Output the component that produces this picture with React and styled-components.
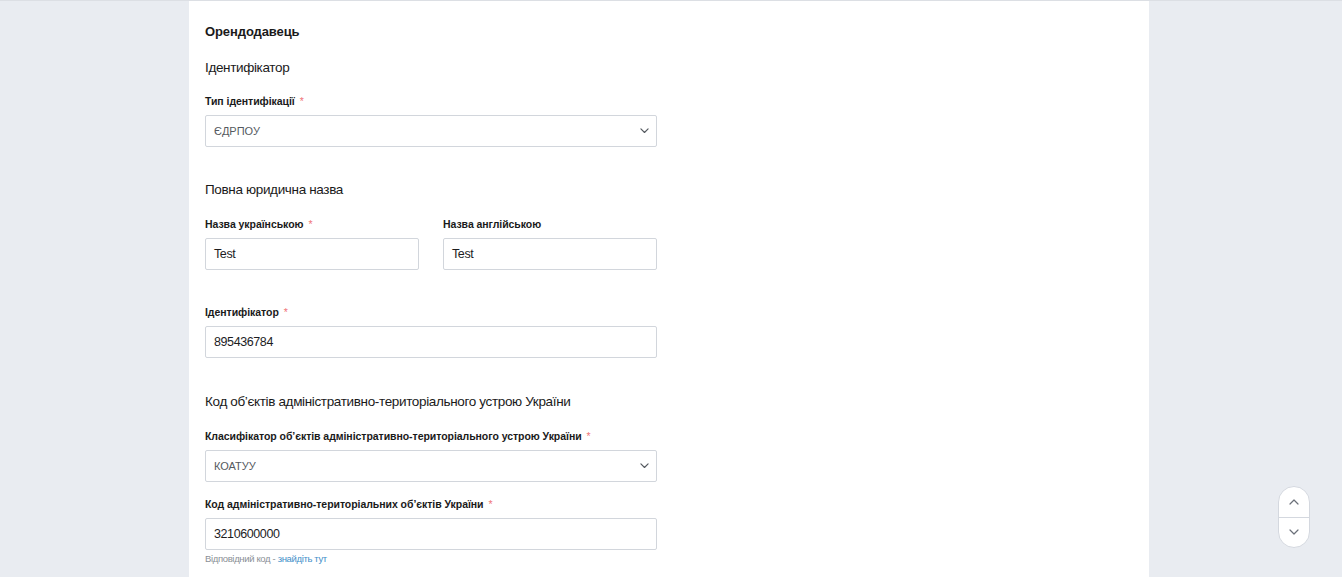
import React from "react";
import styled, { createGlobalStyle } from "styled-components";

const GlobalStyle = createGlobalStyle`
  html, body {
    margin: 0;
    padding: 0;
    background: #e9ecf1;
    font-family: "Liberation Sans", Arial, sans-serif;
    color: #1d1d1f;
  }
  body {
    border-top: 1px solid #dcdfe4;
    min-height: 576px;
  }
`;

const Panel = styled.div`
  margin-left: 189px;
  width: 960px;
  min-height: 576px;
  background: #fff;
  box-sizing: border-box;
  padding: 21px 16px 0 16px;
`;

const Title = styled.h2`
  margin: 0;
  font-size: 13px;
  line-height: 20px;
  font-weight: 700;
  letter-spacing: -0.1px;
  color: #1a1a1a;
`;

const Subtitle = styled.h3`
  margin: ${(p) => p.mt}px 0 0;
  font-size: 13.5px;
  line-height: 20px;
  font-weight: 400;
  letter-spacing: -0.35px;
  color: #1a1a1a;
`;

const Field = styled.div`
  margin-top: ${(p) => p.mt}px;
  width: ${(p) => p.width || "452px"};
  display: flex;
  flex-direction: column;
  gap: 6px;
`;

const Row = styled.div`
  margin-top: ${(p) => p.mt}px;
  display: flex;
  gap: 24px;
`;

const Label = styled.label`
  font-size: 10.5px;
  line-height: 16px;
  font-weight: 700;
  letter-spacing: -0.05px;
  color: #1a1a1a;
`;

const Star = styled.span`
  color: #f0767a;
  margin-left: 5px;
  font-weight: 400;
`;

const Input = styled.div`
  height: 32px;
  box-sizing: border-box;
  border: 1px solid #d2d6dc;
  border-radius: 2px;
  padding: 0 8px;
  display: flex;
  align-items: center;
  font-size: 12.5px;
  letter-spacing: -0.4px;
  color: #1d1d1f;
`;

const Select = styled(Input)`
  justify-content: space-between;
  font-size: 11px;
  letter-spacing: 0;
  color: #555a60;
  padding: 0 7px 0 8px;
`;

const Hint = styled.div`
  margin-top: 2px;
  font-size: 9.5px;
  line-height: 14px;
  letter-spacing: -0.35px;
  color: #8a8f96;
`;

const Link = styled.a`
  color: #3f8fc9;
  text-decoration: none;
`;

const Scroller = styled.div`
  position: fixed;
  right: 32px;
  bottom: 29px;
  width: 32px;
  height: 62px;
  box-sizing: border-box;
  border: 1px solid #d4d8df;
  border-radius: 16px;
  background: #fff;
  display: flex;
  flex-direction: column;
  overflow: hidden;
`;

const ScrollBtn = styled.button`
  flex: 1;
  border: none;
  background: transparent;
  padding: 0;
  display: flex;
  align-items: center;
  justify-content: center;
  border-top: ${(p) => (p.divider ? "1px solid #d4d8df" : "none")};
`;

const Chevron = ({ up, size = 10, color = "#555a60", weight = 1.3 }) => (
  <svg width={size} height={size * 0.6} viewBox="0 0 10 6" fill="none">
    <path
      d={up ? "M1 5L5 1L9 5" : "M1 1L5 5L9 1"}
      stroke={color}
      strokeWidth={weight}
      strokeLinecap="round"
      strokeLinejoin="round"
    />
  </svg>
);

const Req = () => <Star>*</Star>;

export default function App() {
  return (
    <>
      <GlobalStyle />
      <Panel>
        <Title>Орендодавець</Title>

        <Subtitle mt={16}>Ідентифікатор</Subtitle>
        <Field mt={15}>
          <Label>
            Тип ідентифікації<Req />
          </Label>
          <Select>
            ЄДРПОУ
            <Chevron size={9} />
          </Select>
        </Field>

        <Subtitle mt={33}>Повна юридична назва</Subtitle>
        <Row mt={16}>
          <Field mt={0} width="214px">
            <Label>
              Назва українською<Req />
            </Label>
            <Input>Test</Input>
          </Field>
          <Field mt={0} width="214px">
            <Label>Назва англійською</Label>
            <Input>Test</Input>
          </Field>
        </Row>

        <Field mt={34}>
          <Label>
            Ідентифікатор<Req />
          </Label>
          <Input>895436784</Input>
        </Field>

        <Subtitle mt={34}>
          Код об’єктів адміністративно-територіального устрою України
        </Subtitle>
        <Field mt={16}>
          <Label>
            Класифікатор об’єктів адміністративно-територіального устрою
            України<Req />
          </Label>
          <Select>
            КОАТУУ
            <Chevron size={9} />
          </Select>
        </Field>

        <Field mt={14}>
          <Label>
            Код адміністративно-територіальних об’єктів України<Req />
          </Label>
          <Input>3210600000</Input>
        </Field>
        <Hint>
          Відповідний код - <Link href="#">знайдіть тут</Link>
        </Hint>
      </Panel>

      <Scroller>
        <ScrollBtn>
          <Chevron up size={10} color="#6b7079" weight={1.2} />
        </ScrollBtn>
        <ScrollBtn divider>
          <Chevron size={10} color="#6b7079" weight={1.2} />
        </ScrollBtn>
      </Scroller>
    </>
  );
}
